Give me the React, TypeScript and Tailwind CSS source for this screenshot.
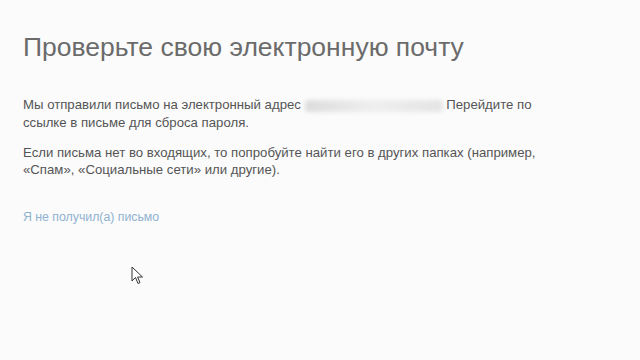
import React from "react";

export default function App() {
  return (
    <div
      className="w-[640px] h-[360px] bg-[#fbfbfb] overflow-hidden relative"
      style={{ fontFamily: '"Liberation Sans", Arial, sans-serif' }}
    >
      <div className="pl-[23px] pt-[31px]">
        <h1 className="text-[26.5px] leading-[32px] text-[#6b6b6b] font-normal">
          Проверьте свою электронную почту
        </h1>
        <p className="mt-[33px] text-[13.2px] leading-[18px] text-[#555]">
          Мы отправили письмо на электронный адрес{" "}
          <span className="inline-block align-middle w-[138px] h-[12px] rounded-sm bg-gradient-to-r from-[#dcdcdc] via-[#efefef] to-[#e4e4e4] blur-[2px]" />{" "}
          Перейдите по
          <br />
          ссылке в письме для сброса пароля.
        </p>
        <p className="mt-[12px] text-[13.2px] leading-[17px] text-[#555]">
          Если письма нет во входящих, то попробуйте найти его в других папках (например,
          <br />
          «Спам», «Социальные сети» или другие).
        </p>
        <p className="mt-[31px] text-[12.3px] leading-[16px] text-[#8fb2d0]">
          Я не получил(а) письмо
        </p>
      </div>
      <svg
        className="absolute left-[131px] top-[266px]"
        width="13"
        height="20"
        viewBox="0 0 13 20"
      >
        <path
          d="M1 1 L1 15 L4.5 11.5 L7 17.5 L9 16.6 L6.6 11 L11.5 11 Z"
          fill="#fff"
          stroke="#333"
          strokeWidth="1"
          strokeLinejoin="round"
        />
      </svg>
    </div>
  );
}
